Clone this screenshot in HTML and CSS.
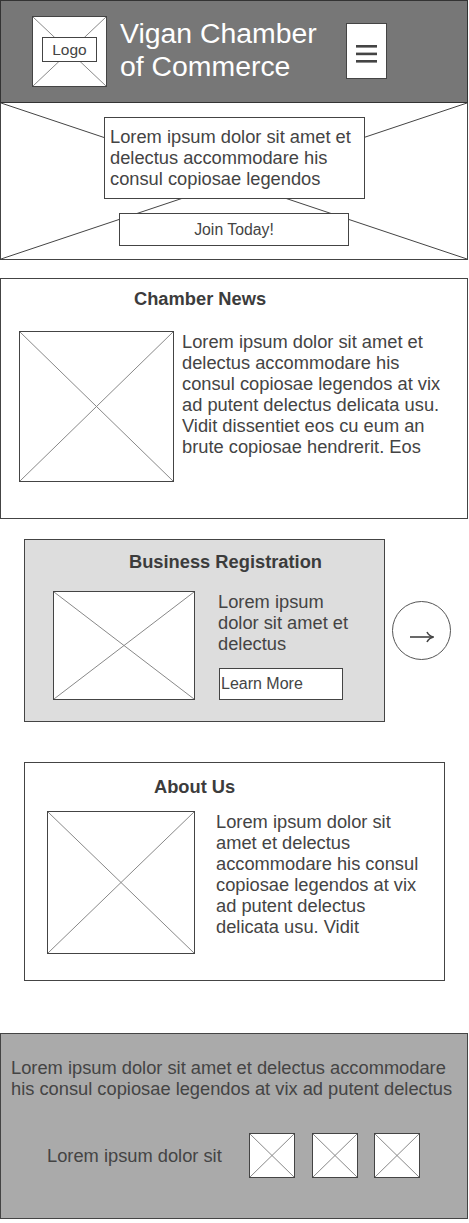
FILE: index.html
```html
<!DOCTYPE html>
<html>
<head>
  <title>Vigan Chamber of Commerce</title>
  <link rel="stylesheet" href="styles.css">
</head>
<body>
  <div class="page">
    <header class="top">
      <div class="logo">
        <svg class="xlines" viewBox="0 0 100 100" preserveAspectRatio="none"><line x1="0" y1="0" x2="100" y2="100"/><line x1="100" y1="0" x2="0" y2="100"/></svg>
        <span class="logo-label">Logo</span>
      </div>
      <h1 class="site-title">Vigan Chamber of Commerce</h1>
      <button class="menu">
        <svg width="21" height="18" viewBox="0 0 21 18"><rect x="0" y="0" width="21" height="2.6"/><rect x="0" y="7.6" width="21" height="2.6"/><rect x="0" y="15" width="21" height="2.6"/></svg>
      </button>
    </header>

    <section class="hero">
      <svg class="xlines dark" viewBox="0 0 100 100" preserveAspectRatio="none"><line x1="0" y1="0" x2="100" y2="100"/><line x1="100" y1="0" x2="0" y2="100"/></svg>
      <p class="hero-text">Lorem ipsum dolor sit amet et delectus accommodare his consul copiosae legendos</p>
      <a class="join">Join Today!</a>
    </section>

    <section class="news">
      <h2 class="news-title">Chamber News</h2>
      <div class="news-body">
        <div class="ph news-img"><svg viewBox="0 0 100 100" preserveAspectRatio="none"><line x1="0" y1="0" x2="100" y2="100"/><line x1="100" y1="0" x2="0" y2="100"/></svg></div>
        <p class="news-text">Lorem ipsum dolor sit amet et delectus accommodare his consul copiosae legendos at vix ad putent delectus delicata usu. Vidit dissentiet eos cu eum an brute copiosae hendrerit. Eos</p>
      </div>
    </section>

    <div class="biz-row">
      <section class="biz">
        <h2 class="biz-title">Business Registration</h2>
        <div class="biz-body">
          <div class="ph biz-img"><svg viewBox="0 0 100 100" preserveAspectRatio="none"><line x1="0" y1="0" x2="100" y2="100"/><line x1="100" y1="0" x2="0" y2="100"/></svg></div>
          <div class="biz-col">
            <p class="biz-text">Lorem ipsum dolor sit amet et delectus</p>
            <a class="learn">Learn More</a>
          </div>
        </div>
      </section>
      <button class="next">
        <svg width="26" height="14" viewBox="0 0 26 14"><path d="M1 7 H24.5"/><path d="M18 2 Q20 6 24.5 7 Q20 8 18 12"/></svg>
      </button>
    </div>

    <section class="about">
      <h2 class="about-title">About Us</h2>
      <div class="about-body">
        <div class="ph about-img"><svg viewBox="0 0 100 100" preserveAspectRatio="none"><line x1="0" y1="0" x2="100" y2="100"/><line x1="100" y1="0" x2="0" y2="100"/></svg></div>
        <p class="about-text">Lorem ipsum dolor sit amet et delectus accommodare his consul copiosae legendos at vix ad putent delectus delicata usu. Vidit</p>
      </div>
    </section>

    <footer class="foot">
      <p class="foot-text">Lorem ipsum dolor sit amet et delectus accommodare his consul copiosae legendos at vix ad putent delectus</p>
      <div class="foot-row">
        <span class="foot-small">Lorem ipsum dolor sit</span>
        <div class="foot-icons">
          <div class="ph foot-img"><svg viewBox="0 0 100 100" preserveAspectRatio="none"><line x1="0" y1="0" x2="100" y2="100"/><line x1="100" y1="0" x2="0" y2="100"/></svg></div>
          <div class="ph foot-img"><svg viewBox="0 0 100 100" preserveAspectRatio="none"><line x1="0" y1="0" x2="100" y2="100"/><line x1="100" y1="0" x2="0" y2="100"/></svg></div>
          <div class="ph foot-img"><svg viewBox="0 0 100 100" preserveAspectRatio="none"><line x1="0" y1="0" x2="100" y2="100"/><line x1="100" y1="0" x2="0" y2="100"/></svg></div>
        </div>
      </div>
    </footer>
  </div>
</body>
</html>
```

FILE: styles.css
```css
body {
  margin: 0;
  font-family: "Liberation Sans", Arial, sans-serif;
  color: #444;
  background-color: white;
}
.page {
  width: 468px;
}
p {
  margin: 0;
  font-size: 18.3px;
  line-height: 21px;
}
h1, h2 {
  margin: 0;
}
svg line {
  stroke: #888;
  stroke-width: 1;
  vector-effect: non-scaling-stroke;
}
.xlines {
  position: absolute;
  left: 0;
  top: 0;
  width: 100%;
  height: 100%;
}
.xlines.dark line {
  stroke: #444;
}

/* header */
.top {
  box-sizing: border-box;
  height: 103px;
  border: 1px solid #333;
  background-color: #777;
  display: flex;
  align-items: flex-start;
  padding: 15px 0 0 31px;
}
.logo {
  position: relative;
  box-sizing: border-box;
  width: 75px;
  height: 71px;
  border: 1px solid #444;
  background-color: white;
  display: flex;
  align-items: center;
  justify-content: center;
}
.logo-label {
  position: relative;
  box-sizing: border-box;
  width: 55px;
  height: 25px;
  margin-top: -4px;
  border: 1px solid #444;
  background-color: white;
  font-size: 15.5px;
  line-height: 23px;
  text-align: center;
}
.site-title {
  width: 214px;
  margin: 1px 0 0 13px;
  font-size: 28.4px;
  line-height: 33px;
  font-weight: normal;
  color: white;
}
.menu {
  box-sizing: border-box;
  width: 41px;
  height: 56px;
  margin: 7px 0 0 12px;
  padding: 5px 0 0 0;
  border: 1px solid #444;
  background-color: white;
  display: flex;
  align-items: center;
  justify-content: center;
}
.menu svg {
  fill: #444;
}

/* hero */
.hero {
  position: relative;
  box-sizing: border-box;
  height: 157px;
  border: 1px solid #444;
  border-top: none;
  padding-top: 14px;
}
.hero-text {
  position: relative;
  box-sizing: border-box;
  width: 261px;
  margin-left: 103px;
  padding: 8px 5px 9px 5px;
  border: 1px solid #444;
  background-color: white;
}
.join {
  position: relative;
  display: block;
  box-sizing: border-box;
  width: 230px;
  height: 33px;
  margin: 14px 0 0 118px;
  border: 1px solid #444;
  background-color: white;
  font-size: 15.8px;
  line-height: 31px;
  text-align: center;
}

/* placeholders */
.ph {
  box-sizing: border-box;
  border: 1px solid #444;
  background-color: white;
  flex: none;
}
.ph svg {
  display: block;
  width: 100%;
  height: 100%;
}

/* chamber news */
.news {
  box-sizing: border-box;
  height: 241px;
  margin-top: 18px;
  border: 1px solid #444;
  padding-top: 9px;
}
.news-title, .biz-title, .about-title {
  font-size: 18.3px;
  line-height: 21px;
  color: #3c3c3c;
}
.news-title {
  margin-left: 133px;
}
.news-body {
  display: flex;
  align-items: flex-start;
  gap: 8px;
  margin-top: 22px;
  padding-left: 18px;
}
.news-img {
  width: 155px;
  height: 151px;
}
.news-text {
  width: 266px;
}

/* business registration */
.biz-row {
  display: flex;
  align-items: center;
  gap: 7px;
  margin: 20px 0 0 24px;
}
.biz {
  box-sizing: border-box;
  width: 361px;
  height: 183px;
  border: 1px solid #444;
  background-color: #ddd;
  padding-top: 11px;
}
.biz-title {
  margin-left: 104px;
}
.biz-body {
  display: flex;
  align-items: flex-start;
  gap: 23px;
  margin-top: 19px;
  padding-left: 28px;
}
.biz-img {
  width: 142px;
  height: 109px;
}
.biz-col {
  width: 140px;
}
.learn {
  display: block;
  box-sizing: border-box;
  width: 124px;
  height: 32px;
  margin: 14px 0 0 1px;
  padding-left: 1px;
  border: 1px solid #444;
  background-color: white;
  font-size: 16px;
  line-height: 30px;
}
.next {
  box-sizing: border-box;
  width: 59px;
  height: 59px;
  padding: 0;
  border: 1px solid #555;
  border-radius: 50%;
  background: none;
  display: flex;
  align-items: center;
  justify-content: center;
}
.next svg {
  margin-top: 13px;
  fill: none;
  stroke: #444;
  stroke-width: 1.6;
}

/* about */
.about {
  box-sizing: border-box;
  width: 421px;
  height: 219px;
  margin: 40px 0 0 24px;
  border: 1px solid #444;
  padding-top: 13px;
}
.about-title {
  margin-left: 129px;
}
.about-body {
  display: flex;
  align-items: flex-start;
  gap: 21px;
  margin-top: 14px;
  padding-left: 22px;
}
.about-img {
  width: 148px;
  height: 143px;
}
.about-text {
  width: 206px;
}

/* footer */
.foot {
  box-sizing: border-box;
  height: 186px;
  margin-top: 52px;
  border: 1px solid #444;
  background-color: #aaa;
  padding: 23px 9px 0 10px;
}
.foot-row {
  display: flex;
  align-items: center;
  margin-top: 34px;
  padding-left: 36px;
}
.foot-small {
  width: 202px;
  font-size: 18.3px;
  line-height: 21px;
}
.foot-icons {
  display: flex;
  gap: 16.5px;
}
.foot-img {
  width: 46px;
  height: 45px;
}
```
